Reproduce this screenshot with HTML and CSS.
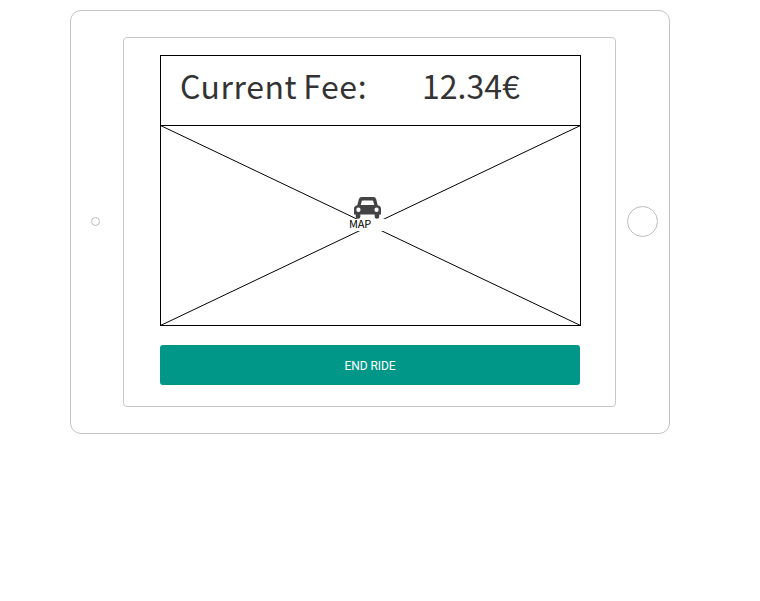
FILE: index.html
```html
<!DOCTYPE html>
<html lang="en">
<head>
<meta charset="utf-8">
<title>Current ride</title>
<link rel="stylesheet" href="styles.css">
</head>
<body>
<main class="tablet">
  <span class="camera"></span>
  <section class="screen">
    <header class="fee">
      <span class="fee-label">Current Fee:</span>
      <span class="fee-value">12.34€</span>
    </header>
    <div class="map">
      <svg class="map-lines" viewBox="0 0 421 201">
        <path d="M.5 .5L420.5 200.5M.5 200.5L420.5 .5" fill="none" stroke="#000"/>
        <path d="M189 94H231V106H189Z" fill="#fff"/>
      </svg>
      <span class="map-label">MAP</span>
      <svg class="car" viewBox="0 0 28 22" preserveAspectRatio="none">
        <path fill="#434345" fill-rule="evenodd" d="M8 0H20Q22.400 0 23 2.300L24.600 8.200Q28 8.800 28 12V17Q28 17.600 27.400 17.600H26.200V19.400A2.400 2.400 0 0 1 21.400 19.400V17.600H6.600V19.400A2.400 2.400 0 0 1 1.800 19.400V17.600H.6Q0 17.600 0 17V12Q0 8.800 3.400 8.200L5 2.300Q5.600 0 8 0ZM8.900 3.400Q8.300 3.400 8.100 4L7 8.100H21L19.900 4Q19.700 3.400 19.100 3.400ZM4.600 10.600A2.200 2.200 0 1 0 4.600 15A2.200 2.200 0 1 0 4.600 10.600ZM23.400 10.600A2.200 2.200 0 1 0 23.400 15A2.200 2.200 0 1 0 23.400 10.600Z"/>
      </svg>
    </div>
    <button class="end-ride" type="button">END RIDE</button>
  </section>
  <span class="home"></span>
</main>
</body>
</html>
```
FILE: styles.css
```css
* { box-sizing: border-box; }

body {
  margin: 0;
  padding: 10px 0 0 70px;
  background: #fff;
  font-family: "Noto Sans CJK SC", "Open Sans", sans-serif;
}

.tablet {
  display: flex;
  align-items: center;
  width: 600px;
  height: 424px;
  border: 1px solid #c4c4c4;
  border-radius: 11px;
}

.camera {
  width: 9px;
  height: 9px;
  margin: 0 0 1px 20px;
  border: 1px solid #bdbdbd;
  border-radius: 50%;
}

.screen {
  display: flex;
  flex-direction: column;
  width: 493px;
  height: 370px;
  margin-left: 23px;
  padding: 17px 34px 0 36px;
  border: 1px solid #c8c8c8;
  border-radius: 4px;
}

.home {
  width: 31px;
  height: 31px;
  margin: 0 0 2px 11px;
  border: 1px solid #bdbdbd;
  border-radius: 50%;
}

.fee {
  display: flex;
  width: 421px;
  height: 70px;
  padding-left: 19px;
  border: 1px solid #000;
  border-bottom: 0;
  color: #333;
  font-size: 32px;
  line-height: 58px;
  white-space: nowrap;
}

.fee-label {
  width: 242px;
  letter-spacing: 0.550px;
  word-spacing: -1.500px;
}

.map {
  position: relative;
  width: 421px;
  height: 201px;
  border: 1px solid #000;
}

.map-lines {
  position: absolute;
  top: -1px;
  left: -1px;
  width: 421px;
  height: 201px;
}

.map-label {
  position: absolute;
  top: 92px;
  left: 188px;
  color: #000;
  font-size: 11px;
  letter-spacing: -0.200px;
  line-height: 11px;
}

.car {
  position: absolute;
  top: 71px;
  left: 193px;
  width: 27px;
  height: 22px;
}

.end-ride {
  width: 420px;
  height: 40px;
  margin-top: 19px;
  padding: 2px 0 0;
  border: 0;
  border-radius: 3px;
  background: #009688;
  color: #fff;
  font: 12px Roboto, sans-serif;
  letter-spacing: -0.100px;
}
```
